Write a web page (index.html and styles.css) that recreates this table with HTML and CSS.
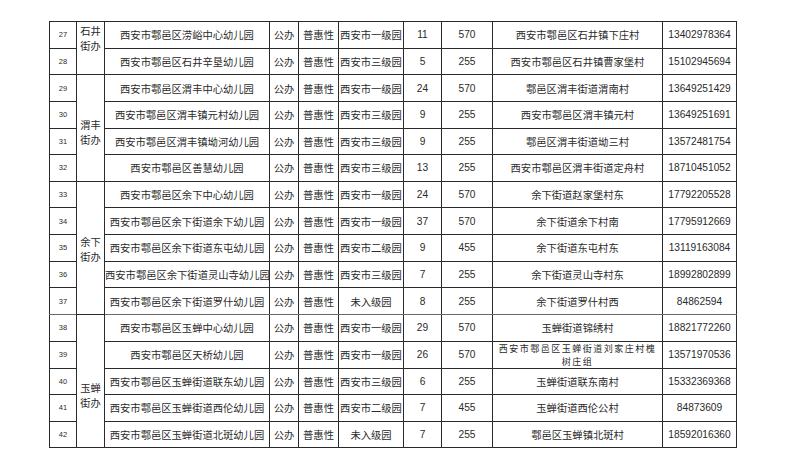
FILE: index.html
```html
<!DOCTYPE html>
<html lang="zh-CN">
<head>
<meta charset="utf-8">
<title>鄠邑区幼儿园名单</title>
<link rel="stylesheet" href="styles.css">
</head>
<body>
<table class="sheet">
  <colgroup>
    <col class="c-no"><col class="c-street"><col class="c-name"><col class="c-type"><col class="c-nature"><col class="c-level"><col class="c-cls"><col class="c-cap"><col class="c-addr"><col class="c-tel">
  </colgroup>
  <tbody>
    <tr><td class="no">27</td><td class="street s1" rowspan="2">石井<br>街办</td><td>西安市鄠邑区涝峪中心幼儿园</td><td>公办</td><td>普惠性</td><td>西安市一级园</td><td class="num">11</td><td class="num">570</td><td>西安市鄠邑区石井镇下庄村</td><td class="num">13402978364</td></tr>
    <tr><td class="no">28</td><td>西安市鄠邑区石井辛垦幼儿园</td><td>公办</td><td>普惠性</td><td>西安市三级园</td><td class="num">5</td><td class="num">255</td><td>西安市鄠邑区石井镇曹家堡村</td><td class="num">15102945694</td></tr>
    <tr><td class="no">29</td><td class="street s2" rowspan="4">渭丰<br>街办</td><td>西安市鄠邑区渭丰中心幼儿园</td><td>公办</td><td>普惠性</td><td>西安市一级园</td><td class="num">24</td><td class="num">570</td><td>鄠邑区渭丰街道渭南村</td><td class="num">13649251429</td></tr>
    <tr><td class="no">30</td><td>西安市鄠邑区渭丰镇元村幼儿园</td><td>公办</td><td>普惠性</td><td>西安市三级园</td><td class="num">9</td><td class="num">255</td><td>西安市鄠邑区渭丰镇元村</td><td class="num">13649251691</td></tr>
    <tr><td class="no">31</td><td>西安市鄠邑区渭丰镇坳河幼儿园</td><td>公办</td><td>普惠性</td><td>西安市三级园</td><td class="num">9</td><td class="num">255</td><td>鄠邑区渭丰街道坳三村</td><td class="num">13572481754</td></tr>
    <tr><td class="no">32</td><td>西安市鄠邑区善慧幼儿园</td><td>公办</td><td>普惠性</td><td>西安市三级园</td><td class="num">13</td><td class="num">255</td><td>西安市鄠邑区渭丰街道定舟村</td><td class="num">18710451052</td></tr>
    <tr><td class="no">33</td><td class="street s3" rowspan="5">余下<br>街办</td><td>西安市鄠邑区余下中心幼儿园</td><td>公办</td><td>普惠性</td><td>西安市一级园</td><td class="num">24</td><td class="num">570</td><td>余下街道赵家堡村东</td><td class="num">17792205528</td></tr>
    <tr><td class="no">34</td><td>西安市鄠邑区余下街道余下幼儿园</td><td>公办</td><td>普惠性</td><td>西安市一级园</td><td class="num">37</td><td class="num">570</td><td>余下街道余下村南</td><td class="num">17795912669</td></tr>
    <tr><td class="no">35</td><td>西安市鄠邑区余下街道东屯幼儿园</td><td>公办</td><td>普惠性</td><td>西安市二级园</td><td class="num">9</td><td class="num">455</td><td>余下街道东屯村东</td><td class="num">13119163084</td></tr>
    <tr><td class="no">36</td><td>西安市鄠邑区余下街道灵山寺幼儿园</td><td>公办</td><td>普惠性</td><td>西安市三级园</td><td class="num">7</td><td class="num">255</td><td>余下街道灵山寺村东</td><td class="num">18992802899</td></tr>
    <tr class="grp-end"><td class="no">37</td><td>西安市鄠邑区余下街道罗什幼儿园</td><td>公办</td><td>普惠性</td><td>未入级园</td><td class="num">8</td><td class="num">255</td><td>余下街道罗什村西</td><td class="num">84862594</td></tr>
    <tr><td class="no">38</td><td class="street s4" rowspan="5">玉蝉<br>街办</td><td>西安市鄠邑区玉蝉中心幼儿园</td><td>公办</td><td>普惠性</td><td>西安市一级园</td><td class="num">29</td><td class="num">570</td><td>玉蝉街道锦绣村</td><td class="num">18821772260</td></tr>
    <tr><td class="no">39</td><td>西安市鄠邑区天桥幼儿园</td><td>公办</td><td>普惠性</td><td>西安市一级园</td><td class="num">26</td><td class="num">570</td><td class="two">西安市鄠邑区玉蝉街道刘家庄村槐<br>树庄组</td><td class="num">13571970536</td></tr>
    <tr><td class="no">40</td><td>西安市鄠邑区玉蝉街道联东幼儿园</td><td>公办</td><td>普惠性</td><td>西安市三级园</td><td class="num">6</td><td class="num">255</td><td>玉蝉街道联东南村</td><td class="num">15332369368</td></tr>
    <tr><td class="no">41</td><td>西安市鄠邑区玉蝉街道西伦幼儿园</td><td>公办</td><td>普惠性</td><td>西安市二级园</td><td class="num">7</td><td class="num">455</td><td>玉蝉街道西伦公村</td><td class="num">84873609</td></tr>
    <tr><td class="no">42</td><td>西安市鄠邑区玉蝉街道北斑幼儿园</td><td>公办</td><td>普惠性</td><td>未入级园</td><td class="num">7</td><td class="num">255</td><td>鄠邑区玉蝉镇北斑村</td><td class="num">18592016360</td></tr>
  </tbody>
</table>
</body>
</html>
```
FILE: styles.css
```css
html, body {
  margin: 0;
  padding: 0;
  background: #ffffff;
}

body {
  padding: 21px 0 0 49px;
}

.sheet {
  border-collapse: collapse;
  table-layout: fixed;
  width: 687px;
  font-family: "Noto Sans CJK SC", "Noto Sans", sans-serif;
  font-size: 10.3px;
  color: #2a2a2a;
}

.c-no { width: 27px; }
.c-street { width: 28px; }
.c-name { width: 165px; }
.c-type { width: 29px; }
.c-nature { width: 40px; }
.c-level { width: 65px; }
.c-cls { width: 38px; }
.c-cap { width: 51px; }
.c-addr { width: 170px; }
.c-tel { width: 74px; }

.sheet tr {
  height: 26.63px;
}

.sheet td {
  border: 1px solid #2b2b2b;
  padding: 0;
  text-align: center;
  vertical-align: middle;
  white-space: nowrap;
  overflow: hidden;
  line-height: 15px;
}

.sheet td.no {
  font-family: "Liberation Sans", Arial, sans-serif;
  font-size: 7.5px;
}

.sheet td.num {
  font-family: "Liberation Sans", Arial, sans-serif;
  font-size: 10.2px;
}

.sheet td.street {
  vertical-align: top;
  line-height: 15px;
}

.sheet td.s1 { padding-top: 1px; }
.sheet td.s2 { padding-top: 42px; }
.sheet td.s3 { padding-top: 52px; }
.sheet td.s4 { padding-top: 65px; }

.sheet td.two {
  font-size: 9px;
  letter-spacing: 1.5px;
  line-height: 13px;
  white-space: normal;
}

.sheet tr.grp-end td {
  border-bottom-color: #6a6a6a;
}
```
